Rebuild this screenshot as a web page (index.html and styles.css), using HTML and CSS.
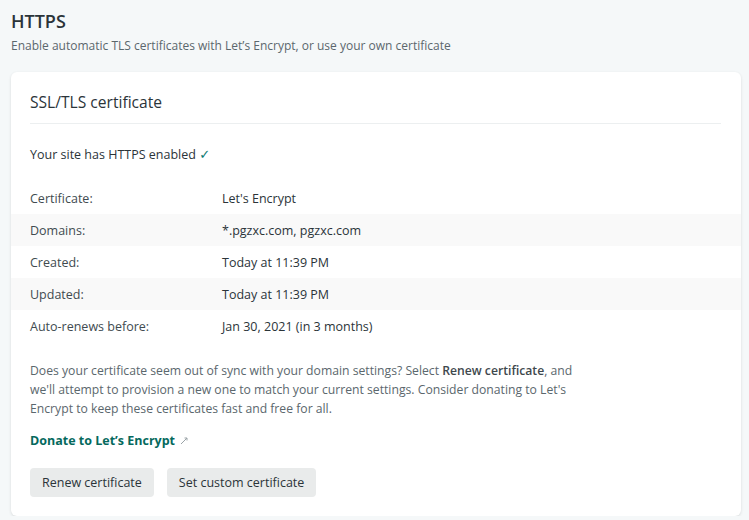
FILE: index.html
```html
<!DOCTYPE html>
<html>
<head>
<meta charset="utf-8">
<link rel="stylesheet" href="styles.css">
</head>
<body>
<div class="page">
  <h1 class="title">HTTPS</h1>
  <p class="subtitle">Enable automatic TLS certificates with Let’s Encrypt, or use your own certificate</p>
  <section class="card">
    <h2 class="card-title">SSL/TLS certificate</h2>
    <p class="status">Your site has HTTPS enabled <span class="check">✓</span></p>
    <dl class="rows">
      <div class="row"><dt>Certificate:</dt><dd>Let's Encrypt</dd></div>
      <div class="row shaded"><dt>Domains:</dt><dd>*.pgzxc.com, pgzxc.com</dd></div>
      <div class="row"><dt>Created:</dt><dd>Today at 11:39 PM</dd></div>
      <div class="row shaded"><dt>Updated:</dt><dd>Today at 11:39 PM</dd></div>
      <div class="row"><dt>Auto-renews before:</dt><dd>Jan 30, 2021 (in 3 months)</dd></div>
    </dl>
    <p class="note">Does your certificate seem out of sync with your domain settings? Select <strong>Renew certificate</strong>, and we'll attempt to provision a new one to match your current settings. Consider donating to Let's Encrypt to keep these certificates fast and free for all.</p>
    <a class="donate" href="#">Donate to Let’s Encrypt <svg class="ext" width="8" height="8" viewBox="0 0 8 8"><path d="M1 7 L7 1 M4.5 1 H7 V3.5" fill="none" stroke="#9aa3a7" stroke-width="1"/></svg></a>
    <div class="actions">
      <button class="btn">Renew certificate</button>
      <button class="btn">Set custom certificate</button>
    </div>
  </section>
</div>
</body>
</html>
```
FILE: styles.css
```css
html, body {
  margin: 0;
  padding: 0;
  background: #f5f8f9;
}
body {
  font-family: "Open Sans", "Noto Sans", sans-serif;
  color: #2e3a40;
}
.page {
  padding: 9px 8px 0 11px;
}
.title {
  margin: 0;
  font-size: 18px;
  font-weight: 600;
  line-height: 24px;
  color: #2b3439;
}
.subtitle {
  margin: 4px 0 0;
  font-size: 12px;
  line-height: 18px;
  color: #5b676d;
}
.card {
  margin-top: 17px;
  background: #fff;
  border-radius: 6px;
  box-shadow: 0 1px 3px rgba(0,0,0,0.12);
  padding: 19px 20px 19px 19px;
}
.card-title {
  margin: 0;
  font-size: 15.6px;
  font-weight: 500;
  line-height: 22px;
  padding-bottom: 10px;
  border-bottom: 1px solid #eceff0;
  color: #2b3439;
}
.status {
  margin: 21px 0 0;
  font-size: 12.5px;
  font-weight: 500;
  line-height: 20px;
  color: #2b3439;
}
.check {
  color: #0b7a70;
  font-family: "DejaVu Sans", sans-serif;
  font-weight: 700;
  font-size: 13px;
}
.rows {
  margin: 17px -20px 0 -19px;
}
.row {
  display: flex;
  height: 32px;
  align-items: center;
  padding: 0 20px 0 19px;
  font-size: 12.5px;
}
.row.shaded {
  background: #f9f9f9;
}
.row dt {
  width: 192px;
  color: #414b50;
}
.row dd {
  margin: 0;
  font-weight: 500;
  color: #2b3439;
}
.note {
  margin: 19px 0 0;
  max-width: 545px;
  font-size: 12.2px;
  line-height: 19px;
  color: #5b676d;
}
.note strong {
  font-weight: 600;
  color: #3e484d;
}
.donate {
  display: inline-flex;
  align-items: center;
  gap: 5px;
  margin-top: 14px;
  font-size: 12.5px;
  font-weight: 700;
  color: #05695d;
  text-decoration: none;
}
.actions {
  display: flex;
  gap: 13px;
  margin-top: 18px;
}
.btn {
  height: 29px;
  padding: 0 12px;
  border: none;
  border-radius: 4px;
  background: #e9ebeb;
  font-family: inherit;
  font-size: 12.5px;
  font-weight: 500;
  color: #2b3439;
}
```
